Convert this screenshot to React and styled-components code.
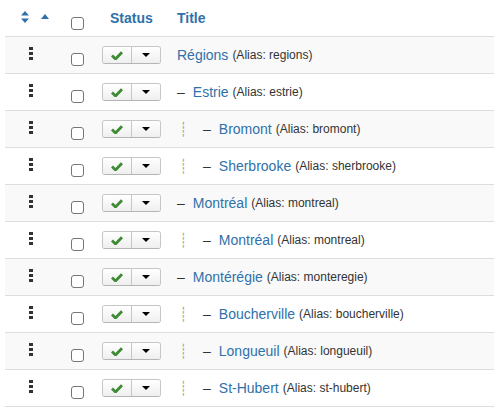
import styled, { createGlobalStyle } from "styled-components";

const GlobalStyle = createGlobalStyle`
    body {
        margin: 0;
        background: #fff;
        font-family: "Liberation Sans", Arial, sans-serif;
        font-size: 13px;
        color: #333;
    }
`;

const Wrapper = styled.div`
    padding-left: 5px;
`;

const Row = styled.div`
    display: grid;
    grid-template-columns: 52px 40px 72px 1fr;
    align-items: center;
    height: 36px;
    border-bottom: 1px solid #ddd;
    background: ${(p) => (p.$striped ? "#f9f9f9" : "#fff")};
`;

const Cell = styled.div`
    display: flex;
    align-items: center;
    justify-content: ${(p) => p.$justify || "flex-start"};
    padding-left: ${(p) => p.$pad || 0}px;
    white-space: nowrap;
`;

const SortIcons = styled.div`
    display: flex;
    align-items: center;
    gap: 12px;
    margin-bottom: 3px;
    padding-left: 7px;
    color: #3071a9;
`;

const HeadLabel = styled.span`
    font-size: 14px;
    font-weight: 700;
    color: #3071a9;
`;

const Check = styled.input.attrs({ type: "checkbox" })`
    appearance: none;
    width: 13px;
    height: 13px;
    margin: ${(p) => (p.$head ? "10px 0 0" : "8px 0 0")};
    border: 1px solid #767676;
    border-radius: 3px;
    background: #fff;
    box-sizing: border-box;
`;

const Handle = styled.svg`
    margin-bottom: 4px;
`;

const Group = styled.div`
    display: flex;
    height: 18px;
    border: 1px solid #c6c6c6;
    border-bottom-color: #b5b5b5;
    border-radius: 3px;
    overflow: hidden;
    box-sizing: border-box;
`;

const GroupButton = styled.span`
    width: 28px;
    display: flex;
    align-items: center;
    justify-content: center;
    background: linear-gradient(#ffffff, #efefef);
    & + & {
        border-left: 1px solid #c6c6c6;
    }
`;

const Caret = styled.span`
    width: 0;
    height: 0;
    border-top: 4px solid #000;
    border-left: 4px solid transparent;
    border-right: 4px solid transparent;
`;

const Guide = styled.span`
    display: inline-block;
    width: 26px;
    padding-left: 2px;
    box-sizing: border-box;
    color: #aea78c;
    font-family: "DejaVu Sans", sans-serif;
    font-size: 14px;
`;

const Dash = styled.span`
    font-size: 14px;
    color: #333;
    margin-right: 8px;
`;

const TitleLink = styled.a`
    font-size: 14px;
    color: #3071a9;
    text-decoration: none;
`;

const Alias = styled.span`
    font-size: 12px;
    color: #333;
    margin-left: 4px;
`;

const items = [
    ["Régions", "regions", 0],
    ["Estrie", "estrie", 1],
    ["Bromont", "bromont", 2],
    ["Sherbrooke", "sherbrooke", 2],
    ["Montréal", "montreal", 1],
    ["Montréal", "montreal", 2],
    ["Montérégie", "monteregie", 1],
    ["Boucherville", "boucherville", 2],
    ["Longueuil", "longueuil", 2],
    ["St-Hubert", "st-hubert", 2],
];

function SortBoth() {
    return (
        <svg width="8" height="12" viewBox="0 0 8 12">
            <path d="M4 0 L8 4.5 L0 4.5 Z M4 12 L8 7.5 L0 7.5 Z" fill="currentColor" />
        </svg>
    );
}

function SortUp() {
    return (
        <svg width="8" height="5" viewBox="0 0 8 5">
            <path d="M4 0 L8 5 L0 5 Z" fill="currentColor" />
        </svg>
    );
}

function Tick() {
    return (
        <svg width="12" height="9" viewBox="0 0 12 9">
            <path d="M1 4.5 L4.5 8 L11 1.2" fill="none" stroke="#3f8a34" strokeWidth="2.8" />
        </svg>
    );
}

export default function App() {
    return (
        <Wrapper>
            <GlobalStyle />
            <Row>
                <Cell $justify="center">
                    <SortIcons>
                        <SortBoth />
                        <SortUp />
                    </SortIcons>
                </Cell>
                <Cell $justify="center">
                    <Check $head />
                </Cell>
                <Cell $pad={13}>
                    <HeadLabel>Status</HeadLabel>
                </Cell>
                <Cell $pad={8}>
                    <HeadLabel>Title</HeadLabel>
                </Cell>
            </Row>
            {items.map(([title, alias, level], i) => (
                <Row key={i} $striped={i % 2 === 0}>
                    <Cell $justify="center">
                        <Handle width="4" height="13" viewBox="0 0 4 13">
                            <rect x="0" y="0" width="4" height="3" fill="#333" />
                            <rect x="0" y="5" width="4" height="3" fill="#333" />
                            <rect x="0" y="10" width="4" height="3" fill="#333" />
                        </Handle>
                    </Cell>
                    <Cell $justify="center">
                        <Check />
                    </Cell>
                    <Cell $pad={5}>
                        <Group>
                            <GroupButton>
                                <Tick />
                            </GroupButton>
                            <GroupButton>
                                <Caret />
                            </GroupButton>
                        </Group>
                    </Cell>
                    <Cell $pad={8}>
                        {level > 1 && <Guide>┊</Guide>}
                        {level > 0 && <Dash>–</Dash>}
                        <TitleLink href="#">{title}</TitleLink>
                        <Alias>(Alias: {alias})</Alias>
                    </Cell>
                </Row>
            ))}
        </Wrapper>
    );
}
